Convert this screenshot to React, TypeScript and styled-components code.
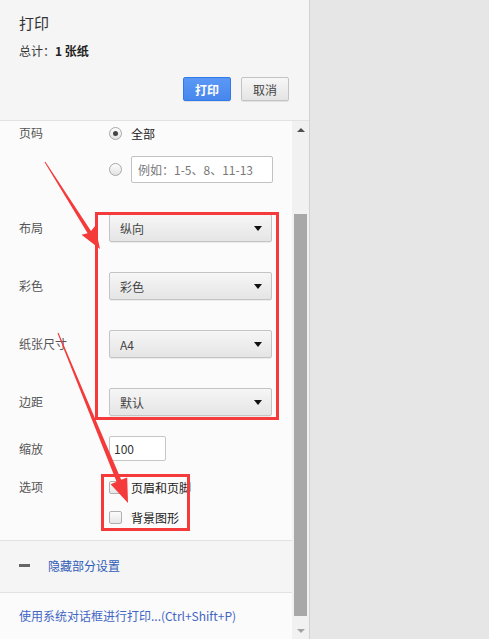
import React from 'react';
import styled, { createGlobalStyle } from 'styled-components';

const GlobalStyle = createGlobalStyle`
  html, body {
    margin: 0;
    padding: 0;
  }
  body {
    font-family: 'Noto Sans CJK SC', 'Liberation Sans', sans-serif;
    font-size: 12px;
    color: #333;
    background: #e6e6e6;
  }
  * {
    box-sizing: border-box;
  }
`;

const selectRows = [
  { label: '布局', value: '纵向' },
  { label: '彩色', value: '彩色' },
  { label: '纸张尺寸', value: 'A4' },
  { label: '边距', value: '默认' },
];

const PrintDialog = () => {
  return (
    <Page>
      <GlobalStyle />
      <Sidebar>
        <Header>
          <Title>打印</Title>
          <Summary>
            总计：<b>1 张纸</b>
          </Summary>
          <ButtonBar>
            <Button $primary>打印</Button>
            <Button>取消</Button>
          </ButtonBar>
        </Header>

        <Body>
          <Content>
            <Settings>
              <Row $top={0} $align="flex-start">
                <Label $h={24}>页码</Label>
                <Stack>
                  <OptionLine $h={24}>
                    <Radio $checked />
                    <OptionText>全部</OptionText>
                  </OptionLine>
                  <OptionLine $h={27} style={{ marginTop: 11 }}>
                    <Radio />
                    <RangeInput>例如：1-5、8、11-13</RangeInput>
                  </OptionLine>
                </Stack>
              </Row>

              {selectRows.map((row, i) => (
                <Row key={row.label} $top={i === 0 ? 31 : 30}>
                  <Label $h={28}>{row.label}</Label>
                  <Select>
                    <span>{row.value}</span>
                    <Caret />
                  </Select>
                </Row>
              ))}

              <Row $top={20}>
                <Label $h={25}>缩放</Label>
                <ScaleInput>100</ScaleInput>
              </Row>

              <Row $top={11} $align="flex-start">
                <Label $h={30}>选项</Label>
                <Stack>
                  <OptionLine $h={30}>
                    <Checkbox />
                    <OptionText>页眉和页脚</OptionText>
                  </OptionLine>
                  <OptionLine $h={30}>
                    <Checkbox />
                    <OptionText>背景图形</OptionText>
                  </OptionLine>
                </Stack>
              </Row>
            </Settings>

            <Toggle>
              <Minus />
              <ToggleText>隐藏部分设置</ToggleText>
            </Toggle>

            <Footer>
              <LinkText>使用系统对话框进行打印...(Ctrl+Shift+P)</LinkText>
            </Footer>
          </Content>

          <Scrollbar>
            <ScrollButton>
              <ArrowUp />
            </ScrollButton>
            <Track>
              <Thumb />
            </Track>
            <ScrollButton>
              <ArrowDown />
            </ScrollButton>
          </Scrollbar>
        </Body>

        {/* red marks drawn on top of the panel */}
        <Marks width="309" height="639" viewBox="0 0 309 639">
          <rect x="96.5" y="213.5" width="181" height="205" fill="none" stroke="#f43a3a" strokeWidth="3" />
          <rect x="102.5" y="475.5" width="86" height="54" fill="none" stroke="#f43a3a" strokeWidth="3" />
          <polygon
            fill="#f43a3a"
            points="45.4,161.7 44.6,162.3 87.6,233.2 81.5,234.7 100,249 95.1,226.1 91,231"
          />
          <polygon
            fill="#f43a3a"
            points="58.5,332.8 57.5,333.2 116.6,481.8 110.6,484.2 128,503 127.2,477.4 121.2,479.8"
          />
        </Marks>
      </Sidebar>
      <Preview />
    </Page>
  );
};

export default PrintDialog;

const Page = styled.div`
  display: flex;
  width: 100%;
  height: 100vh;
  overflow: hidden;
`;

const Sidebar = styled.div`
  position: relative;
  width: 310px;
  flex-shrink: 0;
  display: flex;
  flex-direction: column;
  background: #fbfbfb;
  border-right: 1px solid #d2d2d2;
`;

const Header = styled.div`
  height: 121px;
  padding: 13px 20px 0 19px;
  background: #f5f5f5;
  border-bottom: 1px solid #e2e2e2;
  display: flex;
  flex-direction: column;
`;

const Title = styled.h1`
  margin: 0;
  font-size: 15px;
  font-weight: normal;
  line-height: 20px;
  color: #333;
`;

const Summary = styled.div`
  margin-top: 9px;
  line-height: 18px;
  color: #333;

  > b {
    color: #222;
  }
`;

const ButtonBar = styled.div`
  margin-top: 17px;
  display: flex;
  justify-content: flex-end;
  gap: 10px;
`;

const Button = styled.div<{ $primary?: boolean }>`
  width: 48px;
  height: 24px;
  border-radius: 2px;
  display: flex;
  align-items: center;
  justify-content: center;
  font-weight: ${(p) => (p.$primary ? 'bold' : 'normal')};
  color: ${(p) => (p.$primary ? '#fff' : '#444')};
  border: 1px solid ${(p) => (p.$primary ? '#3079ed' : '#c3c3c3')};
  background: ${(p) =>
    p.$primary
      ? 'linear-gradient(#5b98f6, #4787ed)'
      : 'linear-gradient(#f7f7f7, #e4e4e4)'};
  box-shadow: 0 1px 0 rgba(0, 0, 0, 0.08);
`;

const Body = styled.div`
  flex: 1;
  display: flex;
  min-height: 0;
`;

const Content = styled.div`
  flex: 1;
  display: flex;
  flex-direction: column;
`;

const Settings = styled.div`
  padding: 0 0 8px 19px;
  display: flex;
  flex-direction: column;
`;

const Row = styled.div<{ $top: number; $align?: string }>`
  display: flex;
  align-items: ${(p) => p.$align || 'center'};
  margin-top: ${(p) => p.$top}px;
`;

const Label = styled.div<{ $h: number }>`
  width: 90px;
  flex-shrink: 0;
  line-height: ${(p) => p.$h}px;
  color: #555;
`;

const Stack = styled.div`
  display: flex;
  flex-direction: column;
`;

const OptionLine = styled.div<{ $h: number }>`
  display: flex;
  align-items: center;
  height: ${(p) => p.$h}px;
  gap: 9px;
`;

const OptionText = styled.span`
  color: #222;
`;

const Radio = styled.span<{ $checked?: boolean }>`
  width: 13px;
  height: 13px;
  border-radius: 50%;
  border: 1px solid #a8a8a8;
  background: linear-gradient(#fdfdfd, #e2e2e2);
  display: flex;
  align-items: center;
  justify-content: center;

  &::after {
    content: '';
    width: 5px;
    height: 5px;
    border-radius: 50%;
    background: #444;
    display: ${(p) => (p.$checked ? 'block' : 'none')};
  }
`;

const RangeInput = styled.div`
  width: 142px;
  height: 27px;
  padding-left: 6px;
  border: 1px solid #c2c2c2;
  border-radius: 2px;
  background: #fff;
  color: #777;
  display: flex;
  align-items: center;
`;

const Select = styled.div`
  width: 163px;
  height: 28px;
  padding: 0 9px 0 10px;
  border: 1px solid #c4c4c4;
  border-radius: 2px;
  background: linear-gradient(#f6f6f6, #e5e5e5);
  box-shadow: 0 1px 0 rgba(0, 0, 0, 0.06);
  color: #444;
  display: flex;
  align-items: center;
  justify-content: space-between;
`;

const Caret = styled.span`
  width: 0;
  height: 0;
  border-left: 4px solid transparent;
  border-right: 4px solid transparent;
  border-top: 5px solid #111;
`;

const ScaleInput = styled.div`
  width: 57px;
  height: 25px;
  padding-left: 4px;
  border: 1px solid #c6c6c6;
  border-radius: 2px;
  background: #fff;
  color: #333;
  display: flex;
  align-items: center;
`;

const Checkbox = styled.span`
  width: 13px;
  height: 13px;
  border: 1px solid #b0b0b0;
  border-radius: 2px;
  background: linear-gradient(#fcfcfc, #e6e6e6);
`;

const Toggle = styled.div`
  height: 53px;
  padding: 0 0 3px 19px;
  border-top: 1px solid #e2e2e2;
  border-bottom: 1px solid #e2e2e2;
  background: #f5f5f5;
  display: flex;
  align-items: center;
  gap: 18px;
`;

const Minus = styled.span`
  width: 11px;
  height: 3px;
  background: #666;
`;

const ToggleText = styled.span`
  color: #2f5bb7;
`;

const Footer = styled.div`
  flex: 1;
  padding: 14px 0 0 19px;
`;

const LinkText = styled.span`
  line-height: 18px;
  color: #4265c4;
`;

const Scrollbar = styled.div`
  width: 17px;
  flex-shrink: 0;
  background: #f1f1f1;
  display: flex;
  flex-direction: column;
`;

const ScrollButton = styled.div`
  height: 17px;
  display: flex;
  align-items: center;
  justify-content: center;
`;

const ArrowUp = styled.span`
  width: 0;
  height: 0;
  border-left: 4px solid transparent;
  border-right: 4px solid transparent;
  border-bottom: 4px solid #505050;
`;

const ArrowDown = styled.span`
  width: 0;
  height: 0;
  border-left: 4px solid transparent;
  border-right: 4px solid transparent;
  border-top: 4px solid #a3a3a3;
`;

const Track = styled.div`
  flex: 1;
  padding: 76px 2px 0 2px;
`;

const Thumb = styled.div`
  height: 402px;
  background: #a8a8a8;
`;

const Marks = styled.svg`
  position: absolute;
  left: 0;
  top: 0;
  pointer-events: none;
`;

const Preview = styled.div`
  flex: 1;
  background: #e6e6e6;
`;
